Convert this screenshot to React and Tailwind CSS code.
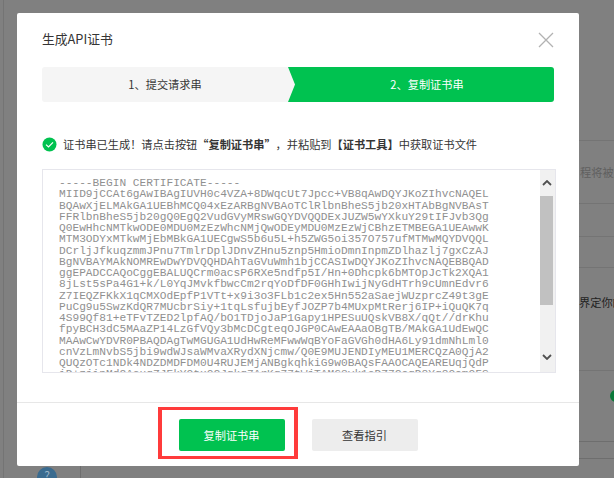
const certLines = [
  '-----BEGIN CERTIFICATE-----',
  'MIID9jCCAt6gAwIBAgIUVH0c4VZA+8DWqcUt7Jpcc+VB8qAwDQYJKoZIhvcNAQEL',
  'BQAwXjELMAkGA1UEBhMCQ04xEzARBgNVBAoTClRlbnBheS5jb20xHTAbBgNVBAsT',
  'FFRlbnBheS5jb20gQ0EgQ2VudGVyMRswGQYDVQQDExJUZW5wYXkuY29tIFJvb3Qg',
  'Q0EwHhcNMTkwODE0MDU0MzEzWhcNMjQwODEyMDU0MzEzWjCBhzETMBEGA1UEAwwK',
  'MTM3ODYxMTkwMjEbMBkGA1UECgwS5b6u5L+h5ZWG5oi357O757ufMTMwMQYDVQQL',
  'DCrljJfkuqzmmJPnu7TmlrDplJDnvZHnu5znp5HmioDmnInpmZDlhazlj7gxCzAJ',
  'BgNVBAYMAkNOMREwDwYDVQQHDAhTaGVuWmh1bjCCASIwDQYJKoZIhvcNAQEBBQAD',
  'ggEPADCCAQoCggEBALUQCrm0acsP6RXe5ndfp5I/Hn+0Dhcpk6bMTOpJcTk2XQA1',
  '8jLst5sPa4G1+k/L0YqJMvkfbwcCm2rqYoDfDF0GHhIwijNyGdHTrh9cUmnEdvr6',
  'Z7IEQZFKkX1qCMXOdEpfP1VTt+x9i3o3FLb1c2ex5Hn552aSaejWUzprcZ49t3gE',
  'PuCg9u5SwzKdQR7MUcbrSiy+1tqLsfujbEyfJOZP7b4MUxpMtRerj6IP+iQuQK7q',
  '4S99Qf81+eTFvTZED2lpfAQ/bO1TDjoJaP1Gapy1HPESuUQskVB8X/qQt//drKhu',
  'fpyBCH3dC5MAaZP14LzGfVQy3bMcDCgteqOJGP0CAwEAAaOBgTB/MAkGA1UdEwQC',
  'MAAwCwYDVR0PBAQDAgTwMGUGA1UdHwReMFwwWqBYoFaGVGh0dHA6Ly91dmNhLml0',
  'cnVzLmNvbS5jbi9wdWJsaWMvaXRydXNjcmw/Q0E9MUJENDIyMEU1MERCQzA0QjA2',
  'QUQzOTc1NDk4NDZDMDFDM0U4RUJEMjANBgkqhkiG9w0BAQsFAAOCAQEAREUqjQdP',
  'iD+zjinMd2AcuqZJEkYOtxQCJqkg7ArKq77tWjTAMG3vk1eDZ7CogD8Yq8OomOFS',
];

const App = () => {
  return (
    <div className="flex h-[478px] w-[614px] overflow-hidden bg-[#808080] font-['Noto_Sans_CJK_SC','Noto_Sans',sans-serif] text-[11.2px] text-[#353535]">
      {/* Left gutter of the dimmed page */}
      <div className="w-[17px] shrink-0 pl-[3px]">
        <div className="h-full w-px bg-[#747474]" />
      </div>

      <div className="w-[562px] shrink-0 pt-[13px]">
        {/* Dialog */}
        <div className="relative flex h-[453px] flex-col rounded-[2px] bg-white">
          <div className="flex-1 px-[25px]">
            <div className="flex h-[54px] items-center justify-between">
              <h2 className="mb-[2px] text-[12.8px] font-normal">生成API证书</h2>
              <svg width="16" height="16" viewBox="0 0 16 16" className="text-[#b2b2b2]">
                <path d="M1 1l14 14M15 1L1 15" stroke="currentColor" strokeWidth="1.3" fill="none" />
              </svg>
            </div>

            {/* Steps */}
            <div className="flex h-[35px] w-[512px] rounded-[3px] bg-[#f5f5f5]">
              <div className="flex w-[246px] items-center justify-center">1、提交请求串</div>
              <div className="flex flex-1 items-center justify-center rounded-r-[3px] bg-[#00c250] pl-[12px] text-white [clip-path:polygon(0_0,100%_0,100%_100%,0_100%,7px_50%)]">
                2、复制证书串
              </div>
            </div>

            {/* Status */}
            <div className="mt-[35px] flex h-[15px] items-center whitespace-nowrap [text-spacing-trim:space-all]">
              <svg width="15" height="15" viewBox="0 0 15 15" className="mr-[6px] shrink-0">
                <circle cx="7.5" cy="7.5" r="7" fill="#00c250" />
                <path d="M4 7.6l2.5 2.4L11 5.4" stroke="#fff" strokeWidth="1.2" fill="none" />
              </svg>
              <span>
                证书串已生成！请点击按钮<b>“复制证书串”</b>，并粘贴到<b>【证书工具】</b>中获取证书文件
              </span>
            </div>

            {/* Certificate box */}
            <div className="mt-[17px] flex h-[204px] w-[514px] overflow-hidden border border-[#e6e6ec] bg-white">
              <div className="min-w-0 flex-1 overflow-hidden whitespace-pre pl-[16px] pt-[8px] font-['Liberation_Mono',monospace] text-[11.2px] leading-[11.25px] text-[#909090]">
                {certLines.map((line) => (
                  <div key={line}>{line}</div>
                ))}
              </div>
              <div className="flex w-[15px] shrink-0 flex-col bg-[#f1f1f1] pr-[2px]">
                <div className="flex h-[26px] items-center justify-center">
                  <svg width="10" height="6" viewBox="0 0 10 6">
                    <path d="M1 5l4-4 4 4" stroke="#505050" strokeWidth="1.8" fill="none" />
                  </svg>
                </div>
                <div className="h-[109px] bg-[#c1c1c1]" />
                <div className="flex-1" />
                <div className="flex h-[30px] items-center justify-center">
                  <svg width="10" height="6" viewBox="0 0 10 6">
                    <path d="M1 1l4 4 4-4" stroke="#505050" strokeWidth="1.8" fill="none" />
                  </svg>
                </div>
              </div>
            </div>
          </div>

          {/* Footer */}
          <div className="flex h-[64px] justify-center gap-[27px] border-t border-[#e7e7e7] pt-[16px]">
            <button className="h-8 w-[106px] rounded-[2px] bg-[#00c250] text-white">复制证书串</button>
            <button className="h-8 w-[106px] rounded-[2px] bg-[#ededed]">查看指引</button>
          </div>

          {/* Red annotation round the primary button */}
          <div className="absolute left-[141px] top-[394px] h-[52px] w-[140px] border-x-4 border-y-[3px] border-[#ff3b3b]" />
        </div>

        {/* Page peeking out under the dialog */}
        <div className="flex h-3 pl-[20px]">
          <div className="mt-[1px] flex h-5 w-5 justify-center rounded-full bg-[#3a6b8f] text-[12px] leading-[16px] text-[#9db5c7]">?</div>
          <div className="ml-[23px] h-full w-px bg-[#6e6e6e]" />
        </div>
      </div>

      {/* Right strip of the dimmed page */}
      <div className="flex min-w-0 flex-1 flex-col overflow-hidden whitespace-nowrap">
        <div className="h-[141px] border-b border-[#747474]" />
        <div className="flex h-[63px] items-center border-b border-[#747474] pl-px text-[#5f5f5f]">程将被遥</div>
        <div className="h-[33px] border-b border-[#747474]" />
        <div className="h-[31px] border-b border-[#747474]" />
        <div className="h-[103px] border-b border-[#747474] pt-[26px] text-[#1f1f1f]">界定你的</div>
        <div className="h-[71px] border-b border-[#6e6e6e] pl-[31px] pt-[19px]">
          <div className="h-3 w-3 rounded-full bg-[#0a7a3a]" />
        </div>
        <div className="h-[17px] border-b border-[#6e6e6e]" />
      </div>
    </div>
  );
};

export default App;
